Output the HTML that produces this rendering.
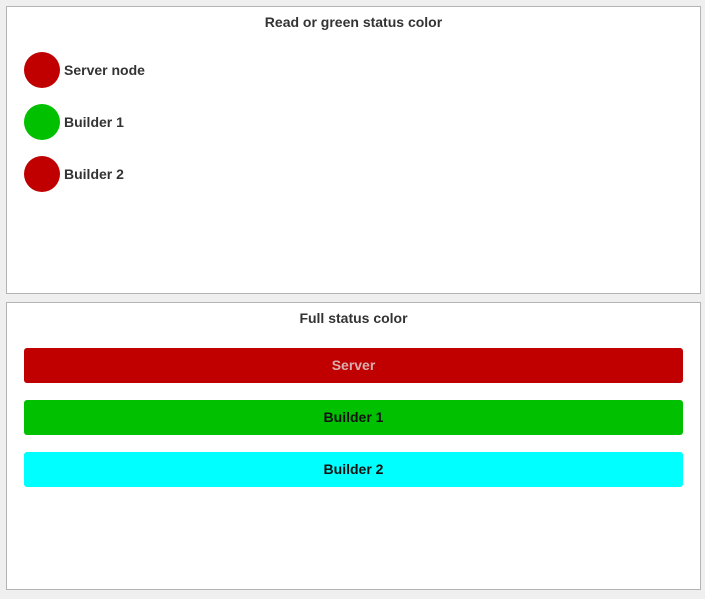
<!DOCTYPE html>
<html><head><style>
body{margin:0;width:705px;height:599px;background:#efefef;font-family:"Liberation Sans",sans-serif;position:relative;overflow:hidden}
.p{position:absolute;left:6px;width:695px;height:288px;background:#fff;border:1px solid #b4b4b4;box-sizing:border-box}
.t{position:absolute;left:0;right:0;text-align:center;top:7px;font-weight:bold;font-size:14px;color:#333}
.c{position:absolute;left:17px;width:36px;height:36px;border-radius:50%}
.l{position:absolute;left:57px;font-weight:bold;font-size:14px;color:#333;line-height:36px}
.b{position:absolute;left:17px;width:659px;height:35px;border-radius:3px;text-align:center;line-height:35px;font-weight:bold;font-size:14px}
</style></head><body>
<div class="p" style="top:6px">
<div class="t">Read or green status color</div>
<div class="c" style="top:45px;background:#c00000"></div><div class="l" style="top:45px">Server node</div>
<div class="c" style="top:97px;background:#00c000"></div><div class="l" style="top:97px">Builder 1</div>
<div class="c" style="top:149px;background:#c00000"></div><div class="l" style="top:149px">Builder 2</div>
</div>
<div class="p" style="top:302px">
<div class="t">Full status color</div>
<div class="b" style="top:45px;background:#c00000;color:#d8b0b0">Server</div>
<div class="b" style="top:97px;background:#00c000;color:#111">Builder 1</div>
<div class="b" style="top:149px;background:#00ffff;color:#111">Builder 2</div>
</div>
</body></html>
